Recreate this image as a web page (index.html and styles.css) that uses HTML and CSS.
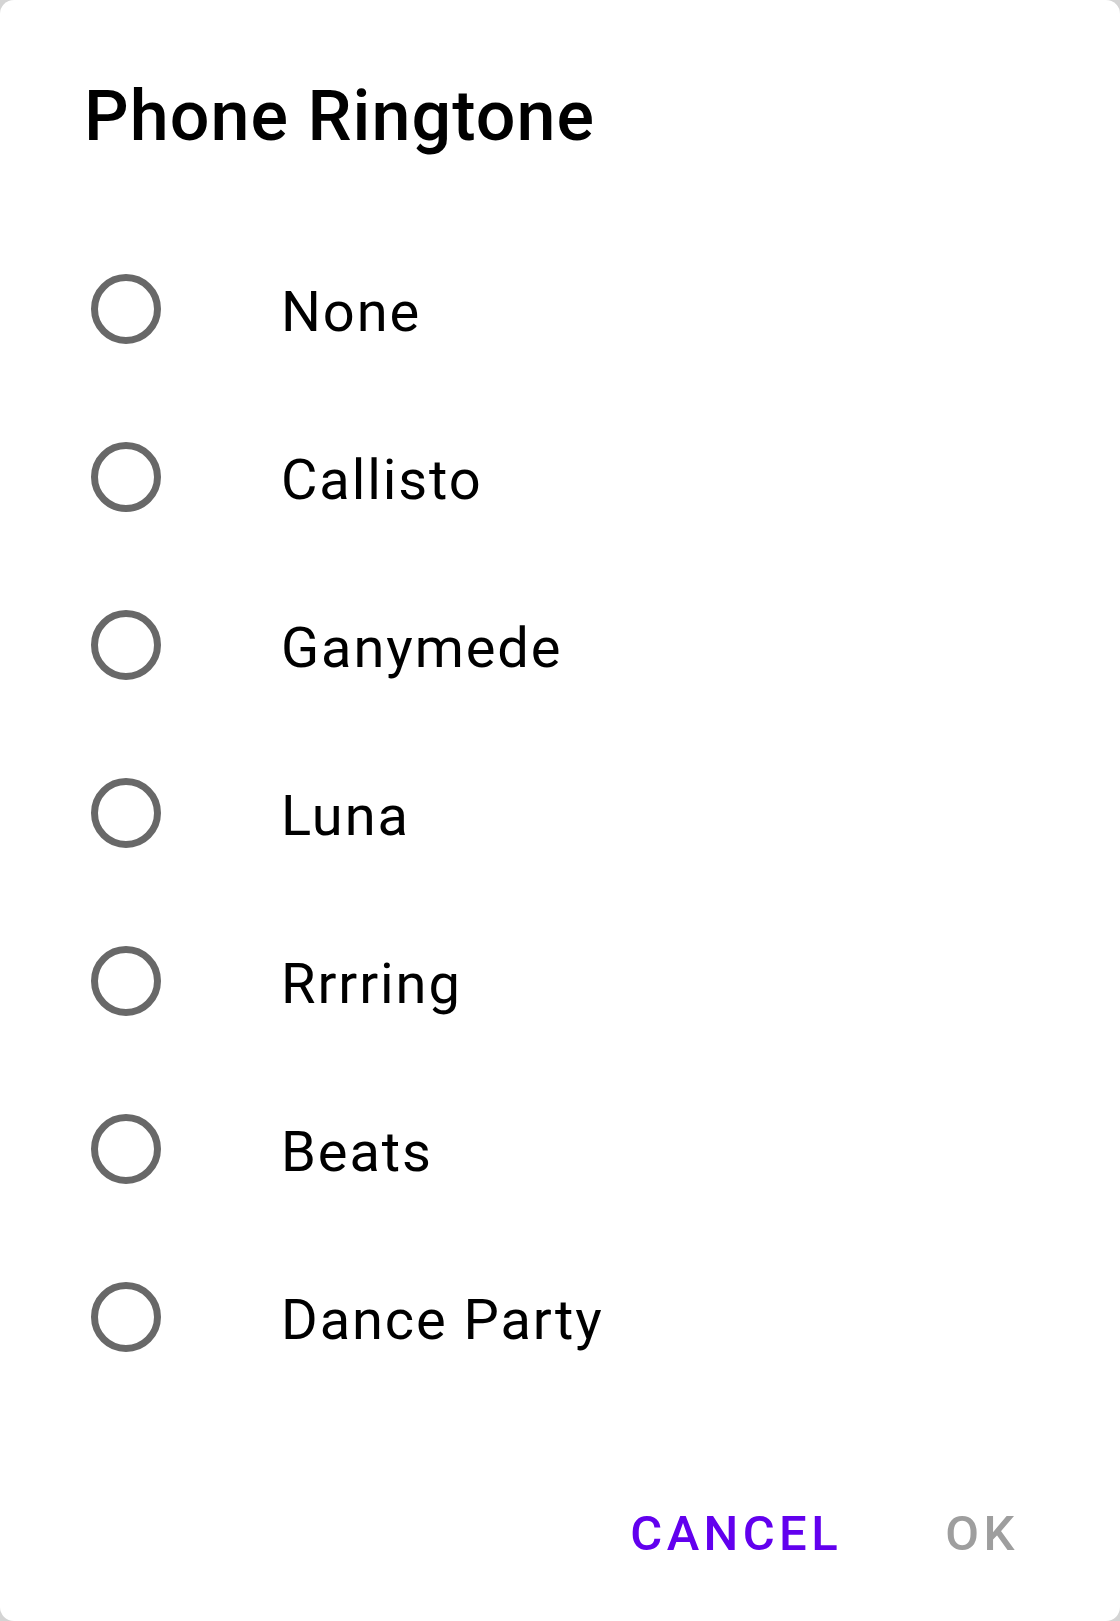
FILE: index.html
```html
<!DOCTYPE html>
<html lang="en">
<head>
<meta charset="utf-8">
<title>Phone Ringtone</title>
<link rel="stylesheet" href="styles.css">
</head>
<body>
<div class="dialog">
  <h1 class="title">Phone Ringtone</h1>
  <ul class="options">
    <li class="option"><span class="radio"><svg viewBox="0 0 84 84" width="84" height="84"><circle cx="42" cy="42" r="31.5"/></svg></span><span class="label">None</span></li>
    <li class="option"><span class="radio"><svg viewBox="0 0 84 84" width="84" height="84"><circle cx="42" cy="42" r="31.5"/></svg></span><span class="label">Callisto</span></li>
    <li class="option"><span class="radio"><svg viewBox="0 0 84 84" width="84" height="84"><circle cx="42" cy="42" r="31.5"/></svg></span><span class="label">Ganymede</span></li>
    <li class="option"><span class="radio"><svg viewBox="0 0 84 84" width="84" height="84"><circle cx="42" cy="42" r="31.5"/></svg></span><span class="label">Luna</span></li>
    <li class="option"><span class="radio"><svg viewBox="0 0 84 84" width="84" height="84"><circle cx="42" cy="42" r="31.5"/></svg></span><span class="label">Rrrring</span></li>
    <li class="option"><span class="radio"><svg viewBox="0 0 84 84" width="84" height="84"><circle cx="42" cy="42" r="31.5"/></svg></span><span class="label">Beats</span></li>
    <li class="option"><span class="radio"><svg viewBox="0 0 84 84" width="84" height="84"><circle cx="42" cy="42" r="31.5"/></svg></span><span class="label">Dance Party</span></li>
  </ul>
  <div class="actions">
    <button class="btn btn-cancel" type="button">Cancel</button>
    <button class="btn btn-ok" type="button" disabled>OK</button>
  </div>
</div>
</body>
</html>
```

FILE: styles.css
```css
html, body {
  margin: 0;
  padding: 0;
}
body {
  background: #d4d4d4;
  font-family: Roboto, "Liberation Sans", sans-serif;
  width: 1120px;
  height: 1621px;
  overflow: hidden;
}
.dialog {
  box-sizing: border-box;
  width: 1120px;
  height: 1621px;
  background: #ffffff;
  border-radius: 14px;
  display: flex;
  flex-direction: column;
}
.title {
  margin: 75px 0 0 0;
  padding: 0 84px;
  font-size: 70px;
  line-height: 82px;
  font-weight: 500;
  letter-spacing: 0.015em;
  color: #000000;
}
.options {
  list-style: none;
  margin: 68px 0 0 0;
  padding: 0;
}
.option {
  height: 168px;
  display: flex;
  align-items: center;
  padding-left: 84px;
}
.radio {
  width: 84px;
  height: 84px;
  display: block;
  flex: none;
}
.radio svg {
  display: block;
}
.radio circle {
  fill: none;
  stroke: #686868;
  stroke-width: 7;
}
.label {
  margin-left: 113px;
  font-size: 56px;
  line-height: 66px;
  letter-spacing: 0.034em;
  color: #000000;
  padding-top: 5px;
}
.actions {
  margin-top: auto;
  display: flex;
  justify-content: flex-end;
  padding: 0 26px 25px 0;
}
.btn {
  box-sizing: border-box;
  height: 126px;
  min-width: 224px;
  padding: 0 28px;
  border: none;
  background: transparent;
  font-family: Roboto, "Liberation Sans", sans-serif;
  font-size: 49px;
  font-weight: 500;
  letter-spacing: 0.0893em;
  text-transform: uppercase;
  cursor: pointer;
}
.btn-cancel {
  color: #6200ee;
}
.btn-ok {
  color: #9e9e9e;
}
```
